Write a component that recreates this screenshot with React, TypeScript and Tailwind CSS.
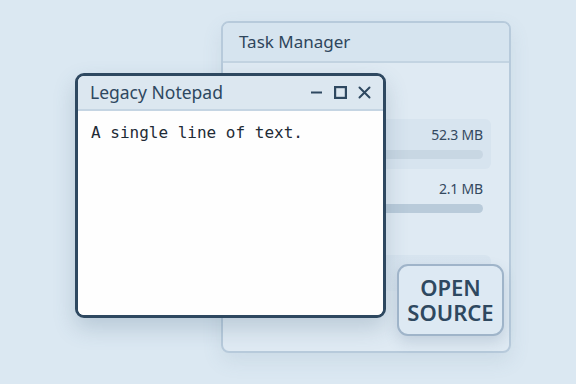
import React from 'react';

function MemRow({ value, fill, panel }: { value: string; fill: number; panel?: boolean }) {
  return (
    <div className={`flex flex-col items-end px-2 pt-[6px] pb-[10px] rounded-md ${panel ? 'bg-[#d7e4ef]' : ''}`}>
      <span className="text-[14px] leading-[20px] text-[#34495f] tracking-[-0.2px]">{value}</span>
      <div className="mt-[5px] w-full h-[9px] rounded-full bg-[#c8d7e3] overflow-hidden">
        <div className="h-full bg-[#b9cbda] rounded-full" style={{ width: `${fill}%` }} />
      </div>
    </div>
  );
}

export default function App() {
  return (
    <div className="relative w-[576px] h-[384px] overflow-hidden bg-[#dbe8f2] font-['Noto_Sans',sans-serif]">
      {/* Task Manager window (behind) */}
      <div className="absolute left-[221px] top-[21px] w-[290px] h-[332px] rounded-[8px] border-2 border-[#b7cadb] bg-[#dfeaf3] shadow-[0_8px_20px_rgba(90,120,150,0.12)] flex flex-col overflow-hidden">
        <div className="h-[40px] shrink-0 flex items-center pl-[16px] bg-[#d6e4ef] border-b-2 border-[#c3d4e2]">
          <span className="text-[17px] text-[#2f465c]">Task Manager</span>
        </div>
        <div className="flex flex-col gap-[4px] pt-[56px] pl-[16px] pr-[18px]">
          <MemRow value="52.3 MB" fill={58} panel />
          <MemRow value="2.1 MB" fill={100} />
          <div className="mt-[28px] h-[36px] rounded-md bg-gradient-to-b from-[#d7e4ef] to-[#dce8f2]" />
        </div>
      </div>

      {/* Legacy Notepad window */}
      <div className="absolute left-[75px] top-[73px] w-[311px] h-[245px] rounded-[9px] border-[3px] border-[#2e4860] bg-white shadow-[0_10px_22px_rgba(60,90,120,0.22)] flex flex-col overflow-hidden">
        <div className="h-[35px] shrink-0 flex items-center justify-between pl-[12px] pr-[12px] bg-[#dce7f0] border-b-2 border-[#c5d5e3]">
          <span className="text-[17.5px] text-[#2e4860]">Legacy Notepad</span>
          <div className="flex items-center gap-[11px] text-[#2e4860]">
            <svg width="13" height="13" viewBox="0 0 13 13">
              <path d="M1 6.5H12" stroke="currentColor" strokeWidth="2.2" />
            </svg>
            <svg width="13" height="13" viewBox="0 0 13 13">
              <rect x="1.1" y="1.1" width="10.8" height="10.8" fill="none" stroke="currentColor" strokeWidth="2.2" />
            </svg>
            <svg width="13" height="13" viewBox="0 0 13 13">
              <path d="M1.5 1.5L11.5 11.5M11.5 1.5L1.5 11.5" stroke="currentColor" strokeWidth="2" strokeLinecap="round" />
            </svg>
          </div>
        </div>
        <div className="flex-1 bg-[#fefefe] pl-[13px] pt-[12px]">
          <p className="font-['DejaVu_Sans_Mono',monospace] text-[16px] leading-[20px] text-[#1f2b36]">
            A single line of text.
          </p>
        </div>
      </div>

      {/* Open source badge */}
      <div className="absolute left-[397px] top-[264px] w-[107px] h-[72px] rounded-[11px] border-2 border-[#9fb4c9] bg-[#dde9f3] shadow-[0_6px_14px_rgba(60,90,120,0.18)] flex items-center justify-center">
        <p className="whitespace-pre-line text-center text-[22px] leading-[25px] font-semibold text-[#2e4860]">
          {'OPEN\nSOURCE'}
        </p>
      </div>
    </div>
  );
}
